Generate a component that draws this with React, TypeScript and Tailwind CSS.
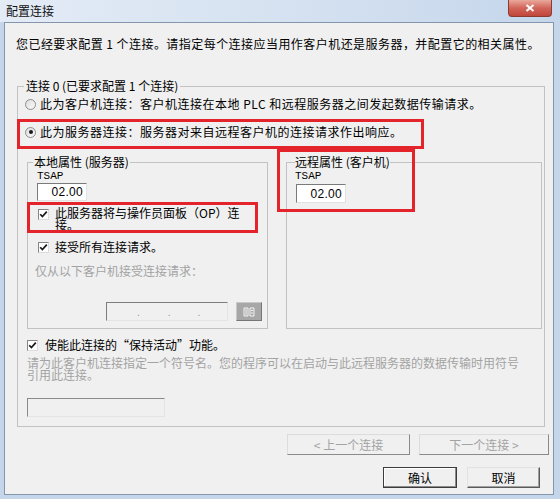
import React from "react";

function Radio({ checked }: { checked?: boolean }) {
  return (
    <span className="ml-[1px] w-[11px] h-[11px] rounded-full border border-[#8c8c8c] bg-gradient-to-br from-[#dcdcdc] to-[#fbfbfb] flex items-center justify-center shrink-0">
      {checked && <span className="w-[4px] h-[4px] rounded-full bg-[#1a1a1a]" />}
    </span>
  );
}

function Check() {
  return (
    <span className="w-[11px] h-[11px] border border-[#858585] border-r-[#dcdcdc] border-b-[#dcdcdc] bg-white flex items-center justify-center shrink-0">
      <svg width="9" height="9" viewBox="0 0 9 9">
        <path d="M1.2 4.2 L3.4 6.6 L7.8 1.6" stroke="#1a1a1a" strokeWidth="1.7" fill="none" />
      </svg>
    </span>
  );
}

export default function App() {
  return (
    <div className="w-[560px] h-[499px] flex flex-col bg-[#c5d6eb] font-['Noto_Sans_CJK_SC','Liberation_Sans',sans-serif] text-[12px] leading-[14px] text-black overflow-hidden">
      {/* title bar */}
      <div className="h-[22px] shrink-0 flex items-start bg-gradient-to-r from-[#e3ebf6] via-[#d6e2f1] to-[#c5d6eb]">
        <span className="ml-[6px] mt-[4px] text-[12px] leading-[14px] text-[#111]">配置连接</span>
        <div className="ml-auto mr-[8px] w-[44px] h-[17px] rounded-b-[4px] border border-t-0 border-[#8d3b31] bg-gradient-to-b from-[#e9a99c] via-[#d1645a] to-[#c0463a] flex items-center justify-center">
          <svg width="10" height="8" viewBox="0 0 10 8">
            <path d="M1.5 1 L8.5 7 M8.5 1 L1.5 7" stroke="#ffffff" strokeWidth="2" />
          </svg>
        </div>
      </div>

      {/* client area */}
      <div className="relative ml-[4px] mr-[6px] mb-[4px] flex-1 border border-[#8496ad] bg-[#f0f0f0] flex flex-col">
        <div className="pt-[14px] pl-[11px] whitespace-nowrap tracking-[0.45px]">
          您已经要求配置 1 个连接。请指定每个连接应当用作客户机还是服务器，并配置它的相关属性。
        </div>

        <fieldset className="mt-[28px] ml-[12px] mr-[10px] border border-[#c2c2c2] pl-[6px] pr-[2px] pb-[9px]">
          <legend className="px-[2px] text-[12px] leading-[14px] whitespace-nowrap">连接 0 (已要求配置 1 个连接)</legend>
          <div className="flex flex-col">
            <div className="mt-[4px] h-[14px] flex items-center gap-[4px] whitespace-nowrap tracking-[0.5px]">
              <Radio />
              <span>此为客户机连接：客户机连接在本地 PLC 和远程服务器之间发起数据传输请求。</span>
            </div>
            <div className="mt-[14px] h-[14px] flex items-center gap-[4px] whitespace-nowrap tracking-[0.5px]">
              <Radio checked />
              <span>此为服务器连接：服务器对来自远程客户机的连接请求作出响应。</span>
            </div>

            <div className="mt-[16px] flex">
              {/* local */}
              <fieldset className="ml-[3px] w-[239px] h-[174px] border border-[#c2c2c2] px-[5px]">
                <legend className="px-[1px] whitespace-nowrap">本地属性 (服务器)</legend>
                <div className="flex flex-col">
                  <div className="ml-[4px] h-[14px] font-['Liberation_Mono',monospace] text-[11px] leading-[14px]">TSAP</div>
                  <div className="ml-[4px] w-[50px] h-[18px] border border-[#7a7a7a] border-r-[#e2e2e2] border-b-[#e2e2e2] bg-white flex items-center justify-end pr-[3px] font-['Liberation_Sans',sans-serif] text-[12px] tracking-[0.3px]">
                    02.00
                  </div>
                  <div className="mt-[6px] ml-[5px] flex items-start gap-[6px]">
                    <span className="mt-[2px]"><Check /></span>
                    <span className="leading-[12px] whitespace-nowrap">
                      此服务器将与操作员面板（OP）连
                      <br />
                      接。
                    </span>
                  </div>
                  <div className="mt-[9px] ml-[5px] h-[14px] flex items-center gap-[6px] whitespace-nowrap">
                    <Check />
                    <span>接受所有连接请求。</span>
                  </div>
                  <div className="mt-[10px] ml-[2px] h-[14px] text-[#a3a3a3] whitespace-nowrap">仅从以下客户机接受连接请求：</div>
                  <div className="mt-[24px] flex">
                    <div className="ml-[73px] w-[122px] h-[19px] border border-[#7e7e7e] border-r-[#e4e4e4] border-b-[#e4e4e4] bg-[#f0f0f0] relative flex items-center text-[#9a9a9a] text-[10px]">
                      <span className="ml-[30px]">.</span>
                      <span className="ml-[28px]">.</span>
                      <span className="ml-[27px]">.</span>
                    </div>
                    <div className="ml-[8px] w-[26px] h-[19px] bg-[#a7a7a7] border border-[#c8c8c8] border-r-[#777] border-b-[#777] flex items-center justify-center">
                      <svg width="12" height="10" viewBox="0 0 12 10">
                        <path d="M1 1 H5 V9 H1 Z M2 3 H4 M2 5 H4 M2 7 H4 M7 1 H11 V9 H7 Z M8 3.5 H10 M8 6 H10" stroke="#f4f4f4" strokeWidth="1" fill="none" />
                      </svg>
                    </div>
                  </div>
                </div>
              </fieldset>

              {/* remote */}
              <fieldset className="ml-[18px] w-[256px] h-[174px] border border-[#c2c2c2] px-[8px]">
                <legend className="whitespace-nowrap">远程属性 (客户机)</legend>
                <div className="flex flex-col">
                  <div className="h-[14px] font-['Liberation_Mono',monospace] text-[11px] leading-[14px]">TSAP</div>
                  <div className="mt-[1px] ml-[1px] w-[50px] h-[19px] border border-[#7a7a7a] border-r-[#e2e2e2] border-b-[#e2e2e2] bg-white flex items-center justify-end pr-[3px] font-['Liberation_Sans',sans-serif] text-[12px] tracking-[0.3px]">
                    02.00
                  </div>
                </div>
              </fieldset>
            </div>

            <div className="mt-[9px] ml-[3px] h-[14px] flex items-center gap-[7px] whitespace-nowrap">
              <Check />
              <span>使能此连接的“保持活动”功能。</span>
            </div>
            <div className="mt-[5px] ml-[3px] leading-[12px] text-[#a3a3a3] whitespace-nowrap">
              请为此客户机连接指定一个符号名。您的程序可以在启动与此远程服务器的数据传输时用符号
              <br />
              引用此连接。
            </div>
            <div className="mt-[17px] ml-[3px] w-[138px] h-[19px] border border-[#8a8a8a] border-r-[#e4e4e4] border-b-[#e4e4e4] bg-[#f0f0f0]" />
          </div>
        </fieldset>

        {/* nav buttons */}
        <div className="mt-[7px] flex justify-end pr-[4px] gap-[9px]">
          <button className="w-[123px] h-[21px] bg-[#f0f0f0] border border-[#dcdcdc] border-r-[#8a8a8a] border-b-[#8a8a8a] text-[#a3a3a3] leading-[14px]">
            &lt; 上一个连接
          </button>
          <button className="w-[130px] h-[21px] bg-[#f0f0f0] border border-[#dcdcdc] border-r-[#8a8a8a] border-b-[#8a8a8a] text-[#a3a3a3] leading-[14px]">
            下一个连接 &gt;
          </button>
        </div>
        <div className="mt-[12px] flex justify-end pr-[13px] gap-[10px]">
          <button className="w-[74px] h-[21px] bg-[#f0f0f0] border border-[#3c3c3c] shadow-[inset_-1px_-1px_0_#8a8a8a,inset_1px_1px_0_#ffffff] leading-[14px]">
            确认
          </button>
          <button className="w-[73px] h-[21px] bg-[#f0f0f0] border border-[#e2e2e2] border-r-[#5a5a5a] border-b-[#5a5a5a] shadow-[inset_-1px_-1px_0_#a0a0a0] leading-[14px]">
            取消
          </button>
        </div>

        {/* red annotation boxes */}
        <div className="absolute left-[12px] top-[96px] w-[407px] h-[30px] border-[3px] border-[#e3242b]" />
        <div className="absolute left-[22px] top-[179px] w-[231px] h-[31px] border-[3px] border-[#e3242b]" />
        <div className="absolute left-[272px] top-[126px] w-[138px] h-[63px] border-[3px] border-[#e3242b]" />
      </div>
    </div>
  );
}
